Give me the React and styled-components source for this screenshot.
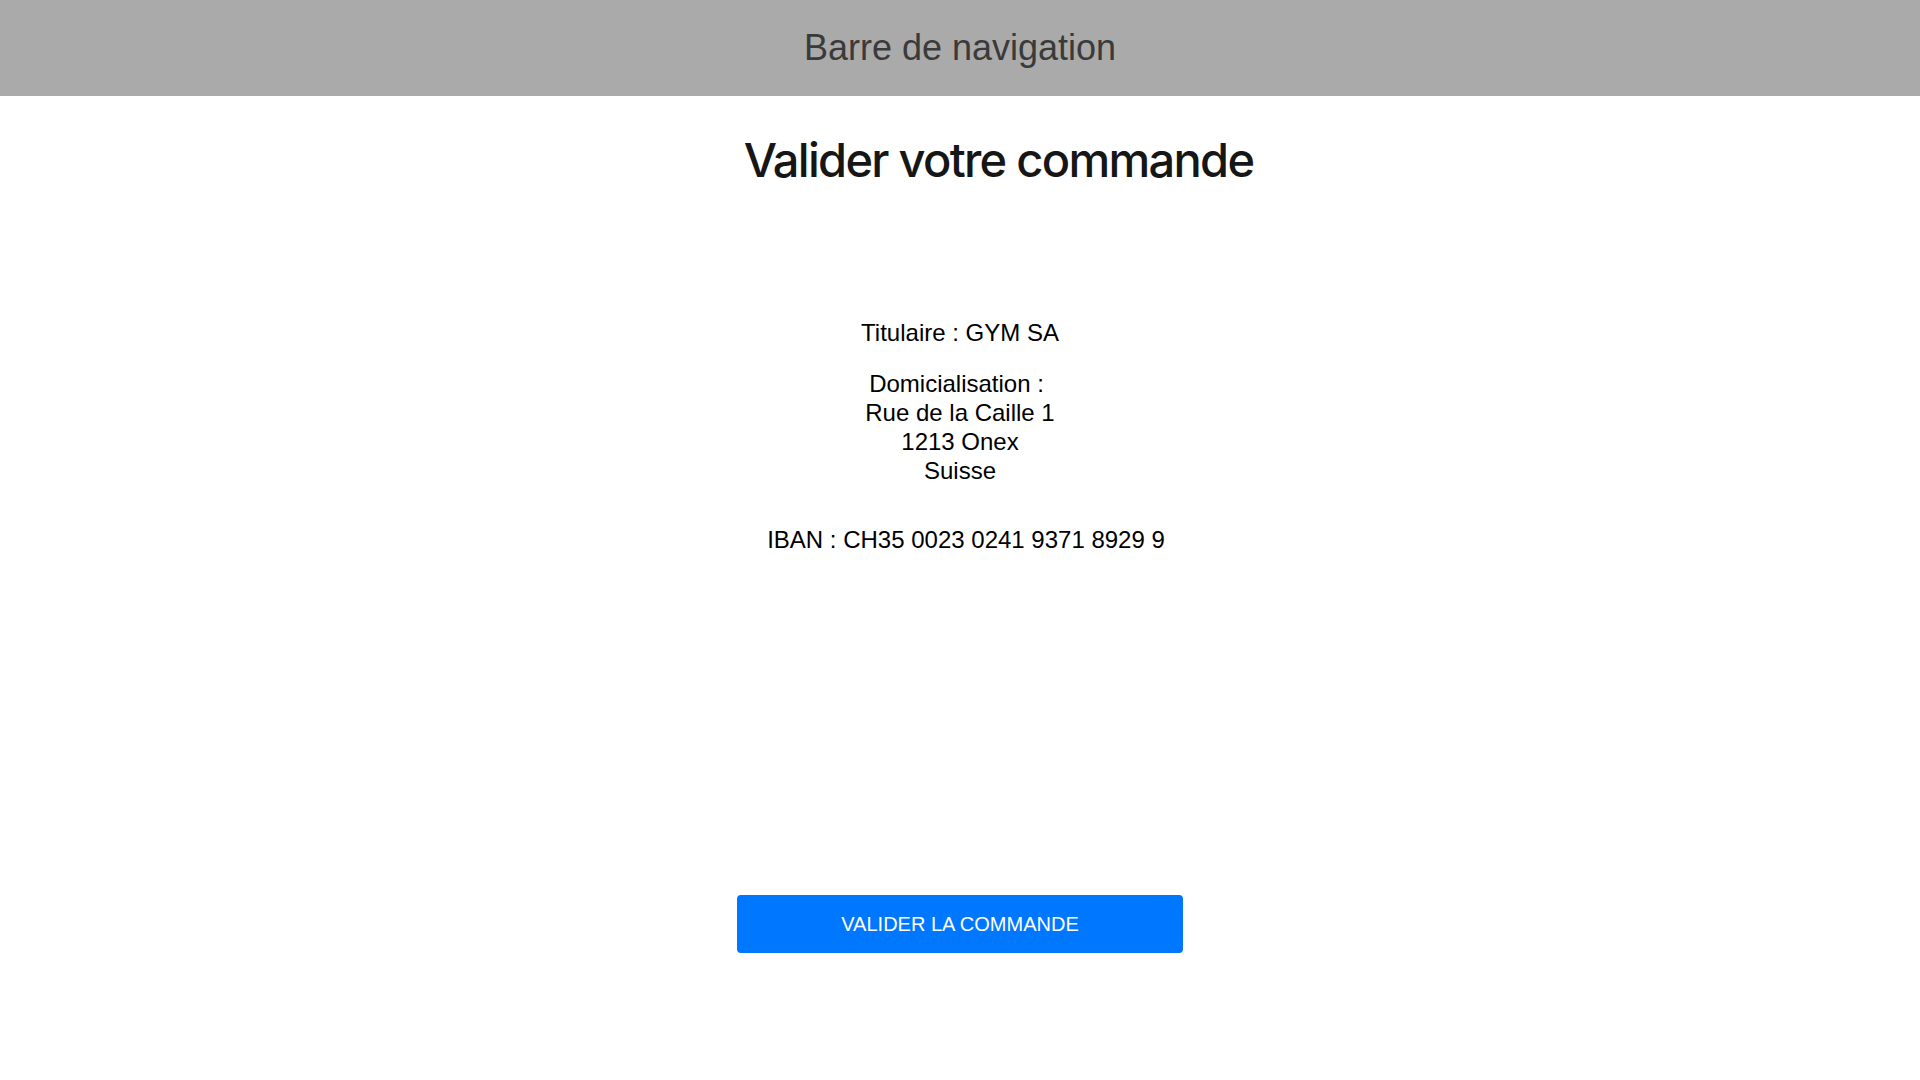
import React from "react";
import styled, { createGlobalStyle } from "styled-components";

const GlobalStyle = createGlobalStyle`
  html, body {
    margin: 0;
    padding: 0;
    background: #fff;
  }
  body {
    font-family: "Liberation Sans", Arial, sans-serif;
    color: #000;
  }
`;

const Page = styled.div`
  min-height: 100vh;
  display: flex;
  flex-direction: column;
`;

const NavBar = styled.header`
  height: 96px;
  background: #aaaaaa;
  display: flex;
  align-items: center;
  justify-content: center;
  font-size: 36px;
  color: #3a3a3a;
`;

const Main = styled.main`
  display: flex;
  flex-direction: column;
  align-items: center;
`;

const Titre = styled.h1`
  margin: 36px 0 0;
  padding-left: 77px;
  font-family: Inter, "Noto Sans", sans-serif;
  font-weight: 500;
  font-size: 47px;
  line-height: 56px;
  letter-spacing: -1.7px;
  color: #161616;
`;

const Infos = styled.section`
  margin-top: 130px;
  display: flex;
  flex-direction: column;
  align-items: center;
  text-align: center;
  font-size: 24px;
  line-height: 29px;
`;

const Ligne = styled.p`
  margin: ${({ $espace }) => $espace || 0}px 0 0;
  padding-left: ${({ $decale }) => $decale || 0}px;
`;

const Libelle = styled.span`
  padding-right: 7px;
`;

const Bouton = styled.button`
  margin-top: 341px;
  width: 446px;
  height: 58px;
  border: 0;
  border-radius: 4px;
  background: #0077ff;
  color: #fff;
  font-family: "Liberation Sans", Arial, sans-serif;
  font-size: 20px;
  text-transform: uppercase;
  cursor: pointer;
`;

export default function App() {
  return (
    <>
      <GlobalStyle />
      <Page>
        <NavBar>Barre de navigation</NavBar>
        <Main>
          <Titre>Valider votre commande</Titre>

          <Infos>
            <Ligne>Titulaire : GYM SA</Ligne>
            <Ligne $espace={22}>
              <Libelle>Domicialisation :</Libelle>
              <br />
              Rue de la Caille 1<br />
              1213 Onex<br />
              Suisse
            </Ligne>
            <Ligne $espace={40} $decale={12}>IBAN : CH35 0023 0241 9371 8929 9</Ligne>
          </Infos>

          <Bouton>Valider la commande</Bouton>
        </Main>
      </Page>
    </>
  );
}
